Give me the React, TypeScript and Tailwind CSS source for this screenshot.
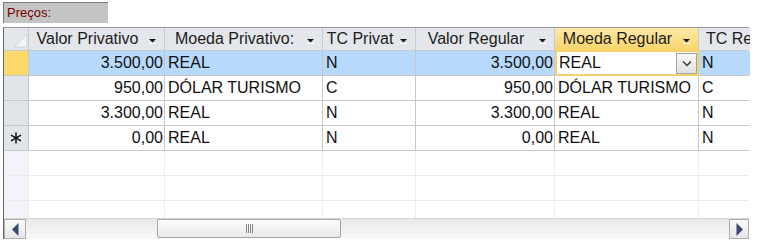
import React from 'react';

type Col = { title: string; width: number; align: 'left' | 'right'; last?: boolean };

const cols: Col[] = [
  { title: 'Valor Privativo', width: 136, align: 'right' },
  { title: 'Moeda Privativo:', width: 158, align: 'left' },
  { title: 'TC Privat', width: 93, align: 'left' },
  { title: 'Valor Regular', width: 139, align: 'right' },
  { title: 'Moeda Regular', width: 144, align: 'left' },
  { title: 'TC Regular', width: 51, align: 'left', last: true },
];

const rows = [
  ['3.500,00', 'REAL', 'N', '3.500,00', 'REAL', 'N'],
  ['950,00', 'DÓLAR TURISMO', 'C', '950,00', 'DÓLAR TURISMO', 'C'],
  ['3.300,00', 'REAL', 'N', '3.300,00', 'REAL', 'N'],
  ['0,00', 'REAL', 'N', '0,00', 'REAL', 'N'],
];

const FilterArrow = () => (
  <svg width="9" height="6" viewBox="0 0 9 6" className="absolute right-[7px] top-[10px]">
    <polygon points="1,1 8,1 4.5,4.5" fill="#111" />
    <line x1="1" y1="5.5" x2="8" y2="5.5" stroke="#fff" strokeWidth="1" />
  </svg>
);

const NewRowMark = () => (
  <svg width="12" height="12" viewBox="0 0 12 12">
    <g stroke="#111" strokeWidth="1.5">
      <line x1="6" y1="0.5" x2="6" y2="11.5" />
      <line x1="1" y1="3.2" x2="11" y2="8.8" />
      <line x1="1" y1="8.8" x2="11" y2="3.2" />
    </g>
  </svg>
);

export default function App() {
  return (
    <div className="w-[758px] h-[243px] bg-white overflow-hidden" style={{ fontFamily: '"Liberation Sans", Arial, sans-serif' }}>
      <div className="pt-[2px] pl-[3px]">
        <div className="w-[105px] h-[21px] bg-[#c4c4c4] border-t border-l border-[#7c7c7c] text-[13px] leading-[19px] text-[#7a0000] pl-[3px]">
          Preços:
        </div>
      </div>

      <div className="mt-[4px] ml-[3px] w-[746px] border-t border-l border-t-[#9a9a9a] border-l-[#6a6a6a] bg-white">
        {/* header */}
        <div className="flex h-[23px] border-b border-[#c6c9ce]">
          <div className="w-[25px] shrink-0 bg-[#e3e6ea] border-r border-[#c6c9ce] relative">
            <svg width="14" height="14" viewBox="0 0 14 14" className="absolute left-[10px] top-[6px]">
              <polygon points="0,13 13,0 13,13" fill="#f3f4f6" stroke="#cfd3d8" strokeWidth="1" />
            </svg>
          </div>
          {cols.map((c, i) => {
            const active = i === 4;
            return (
              <div
                key={c.title}
                style={{ width: c.width }}
                className={`shrink-0 relative overflow-hidden whitespace-nowrap text-[16px] leading-[22px] text-[#1c1c1c] ${
                  c.last ? 'pl-[7px]' : 'border-r border-[#c6c9ce] text-center pr-[18px]'
                } ${active ? 'bg-gradient-to-b from-[#fde9a6] to-[#f9d46a]' : 'bg-[#e3e6ea]'}`}
              >
                {c.title}
                {!c.last && <FilterArrow />}
              </div>
            );
          })}
        </div>

        {/* data rows */}
        {rows.map((r, ri) => {
          const selected = ri === 0;
          return (
            <div key={ri} className="flex h-[25px] border-b border-[#c8c8c8]">
              <div
                className={`w-[25px] shrink-0 border-r border-[#c8c8c8] flex items-center justify-center ${
                  selected ? 'bg-[#fdd96c]' : 'bg-[#e1e4e8]'
                }`}
              >
                {ri === 3 && <NewRowMark />}
              </div>
              {cols.map((c, ci) => {
                const editing = selected && ci === 4;
                if (editing) {
                  return (
                    <div
                      key={ci}
                      style={{ width: c.width }}
                      className="shrink-0 h-[26px] bg-white border-2 border-[#f4d36d] -mt-px flex items-end text-[16px] text-[#111] pl-[2px]"
                    >
                      <span className="flex-1 self-center">{r[ci]}</span>
                      <div className="w-[21px] h-[21px] bg-gradient-to-b from-[#f7f7f7] to-[#e0e0e0] border border-[#a3a3a3] flex items-center justify-center">
                        <svg width="10" height="7" viewBox="0 0 10 7">
                          <polyline points="1,1.5 5,5.5 9,1.5" fill="none" stroke="#3c3c3c" strokeWidth="1.5" />
                        </svg>
                      </div>
                    </div>
                  );
                }
                return (
                  <div
                    key={ci}
                    style={{ width: c.width }}
                    className={`shrink-0 overflow-hidden whitespace-nowrap text-[16px] leading-[24px] text-[#111] ${
                      c.align === 'right' ? 'text-right pr-[1px]' : 'pl-[3px]'
                    } ${c.last ? '' : 'border-r border-[#c8c8c8]'} ${selected ? 'bg-[#b7dafc]' : 'bg-white'}`}
                  >
                    {r[ci]}
                  </div>
                );
              })}
            </div>
          );
        })}

        {/* empty rows */}
        {[25, 25, 17].map((h, ei) => (
          <div key={ei} style={{ height: h }} className={`flex ${ei < 2 ? 'border-b border-[#ebebeb]' : ''}`}>
            <div className="w-[25px] shrink-0 bg-[#f3f4fb] border-r border-[#ebebeb]" />
            {cols.map((c, ci) => (
              <div key={ci} style={{ width: c.width }} className={`shrink-0 ${c.last ? '' : 'border-r border-[#ebebeb]'}`} />
            ))}
          </div>
        ))}

        {/* horizontal scrollbar */}
        <div className="flex h-[21px] border-t border-[#d6d6d6] bg-gradient-to-b from-[#e9e9e9] to-[#f9f9f9]">
          <div className="w-[22px] shrink-0 border border-[#aeaeae] bg-gradient-to-b from-[#fbfbfb] to-[#e6e6e6] flex items-center justify-center">
            <svg width="7" height="13" viewBox="0 0 7 13">
              <polygon points="6.5,0 6.5,13 0,6.5" fill="#394a6e" />
            </svg>
          </div>
          <div className="flex-1 relative">
            <div className="absolute left-[131px] w-[184px] top-0 h-[19px] rounded-[2px] border border-[#a7a7a7] bg-gradient-to-b from-[#fdfdfd] to-[#e9e9e9] flex items-center justify-center gap-[1px]">
              {[0, 1, 2, 3].map((g) => (
                <div key={g} className="w-px h-[9px] bg-[#858585]" />
              ))}
            </div>
          </div>
          <div className="w-[20px] shrink-0 border border-[#aeaeae] bg-gradient-to-b from-[#fbfbfb] to-[#e6e6e6] flex items-center justify-center">
            <svg width="7" height="13" viewBox="0 0 7 13">
              <polygon points="0.5,0 0.5,13 7,6.5" fill="#394a6e" />
            </svg>
          </div>
        </div>
      </div>
    </div>
  );
}
